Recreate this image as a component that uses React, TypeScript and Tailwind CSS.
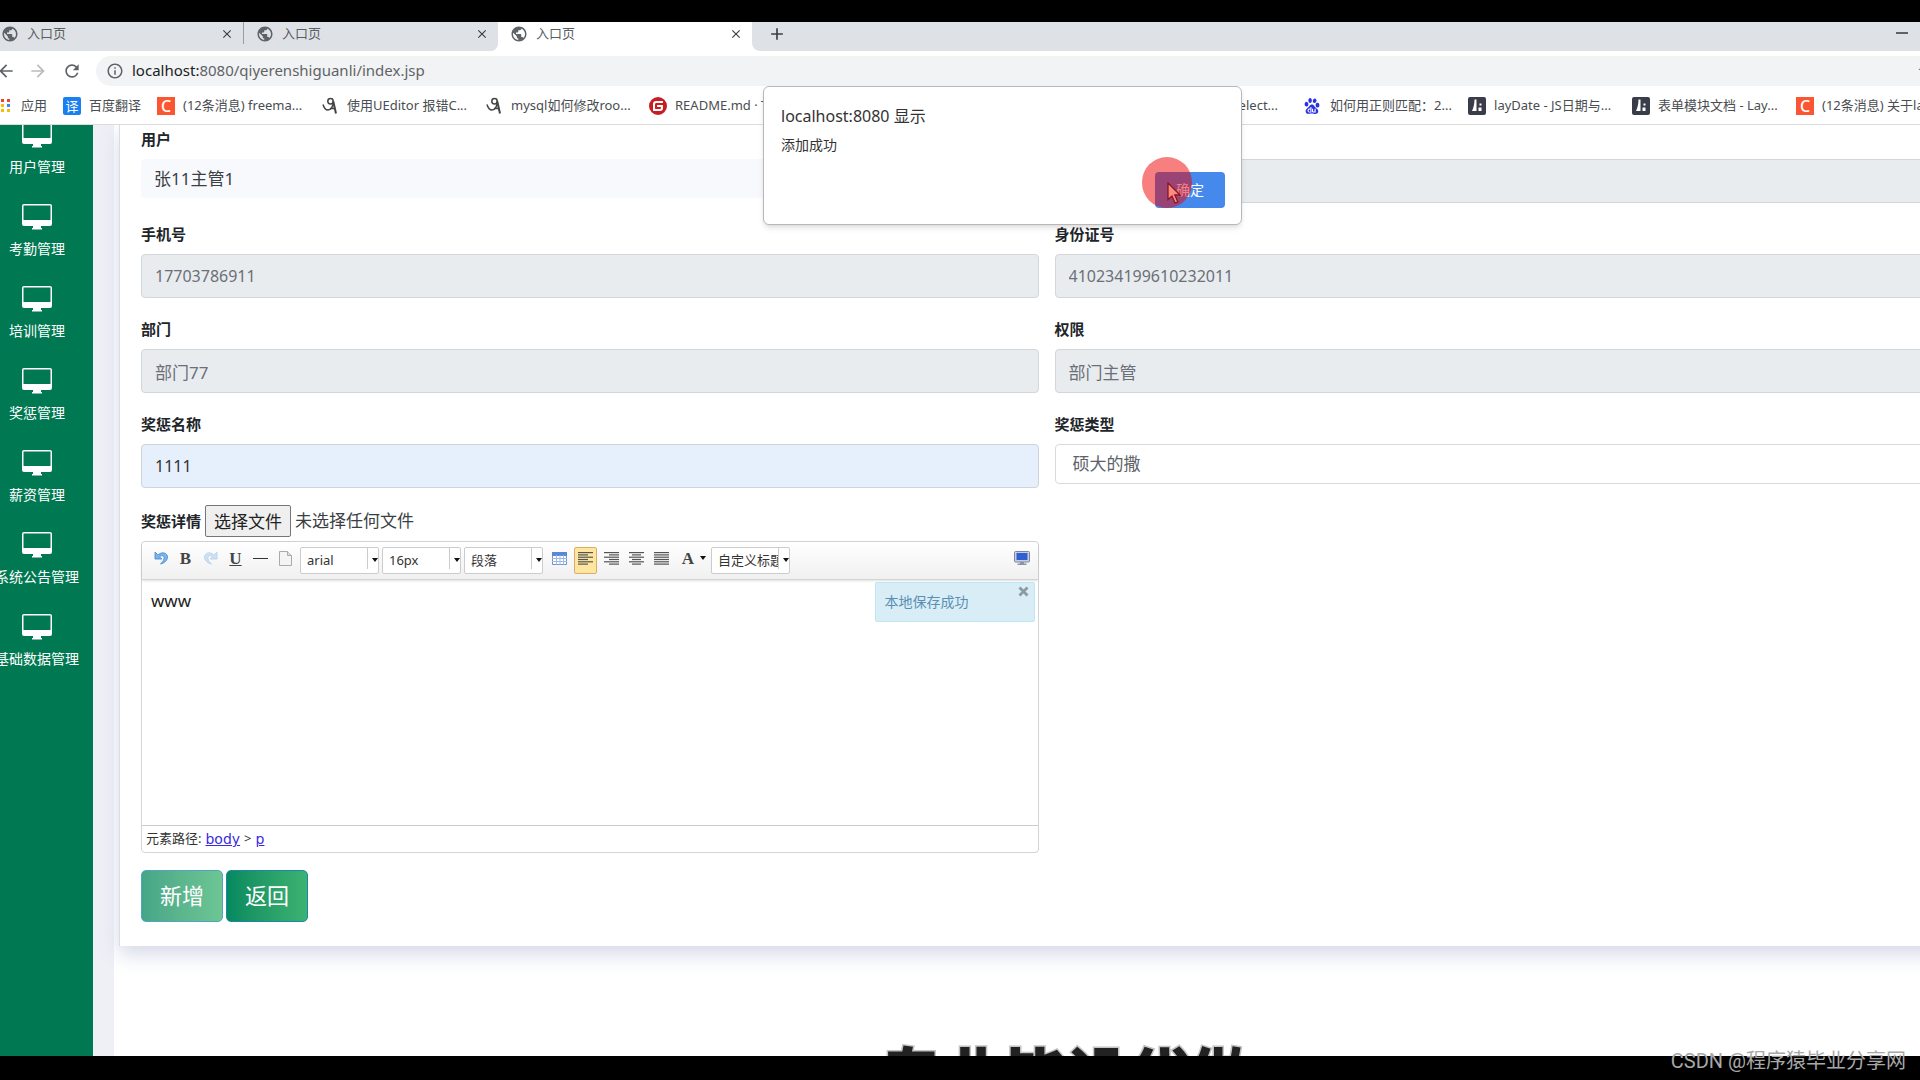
import React, { useRef, useState } from "react";
import {
    MdAdd,
    MdArrowBack,
    MdArrowForward,
    MdClose,
    MdInfoOutline,
    MdPublic,
    MdRefresh,
    MdStar,
} from "react-icons/md";
import { SiBaidu, SiGitee } from "react-icons/si";

const menus = [
    "用户管理",
    "考勤管理",
    "培训管理",
    "奖惩管理",
    "薪资管理",
    "系统公告管理",
    "基础数据管理",
];

const DesktopIcon = () => (
    <svg width="30" height="26" viewBox="0 0 30 26" fill="#fff">
        <path
            fillRule="evenodd"
            d="M2 0h26a2 2 0 0 1 2 2v18a2 2 0 0 1-2 2H2a2 2 0 0 1-2-2V2a2 2 0 0 1 2-2Zm-.5 1.500V16h27V1.500Z"
        />
        <path d="M11 22h8v2h1v1.500H10V24h1Z" />
    </svg>
);

const AppsIcon = () => (
    <svg width="12" height="14" viewBox="0 0 12 14">
        <path fill="#ea4335" d="M1 0h3v3H1zM7 0h3v3H7z" />
        <path fill="#fbbc04" d="M1 5h3v3H1z" />
        <path fill="#4285f4" d="M7 5h3v3H7z" />
        <path fill="#fbbc04" d="M1 10h3v3H1zM7 10h3v3H7z" />
    </svg>
);

const CIcon = () => (
    <span className="flex h-[18px] w-[18px] shrink-0 items-center justify-center bg-[#fc5531] text-base leading-none font-medium text-white">
        C
    </span>
);

const BrushIcon = () => (
    <svg width="18" height="18" viewBox="0 0 18 18" fill="none" stroke="#444" className="shrink-0">
        <circle cx="9.5" cy="4.2" r="2.7" strokeWidth="1.5" />
        <path d="M12.2 4.500c.3 4.500-2 8.500-5.200 8.500-2.500 0-4-2-5-5.500" strokeWidth="1.500" />
        <path d="M12.300 4.500 15 16.500" strokeWidth="2" />
        <path d="M9 11.500h4.500" strokeWidth="1.500" />
    </svg>
);

const LayuiIcon = () => (
    <svg width="18" height="18" viewBox="0 0 18 18" className="shrink-0">
        <rect width="18" height="18" rx="2" fill="#393d49" />
        <path fill="#fff" d="M8.500 2.500V14H4C5.500 11 6.500 7 6.500 2.500ZM11.500 6.500h2v2h-2zM10.500 10.500h3V14h-3z" />
    </svg>
);

const TranslateIcon = () => (
    <span className="flex h-[18px] w-[18px] shrink-0 items-center justify-center rounded-xs bg-[#1a7ff0] text-[13px] leading-none text-white">
        译
    </span>
);

const Tab = ({ active }: { active?: boolean }) => (
    <div
        className={`flex w-[254px] items-center pr-[9px] pb-[5px] pl-3 ${
            active ? "bg-white" : "bg-[#dee1e6]"
        }`}
    >
        <MdPublic className="mr-2 text-lg text-[#5f6368]" />
        <span className="flex-1 text-[13px] text-[#5a5d61]">入口页</span>
        <button aria-label="关闭标签页">
            <MdClose className="text-sm text-[#3c4043]" />
        </button>
    </div>
);

const Bookmark = ({ icon, text }: { icon: React.ReactNode; text: string }) => (
    <a href="#" className="flex w-[146px] shrink-0 items-center gap-2 whitespace-nowrap">
        {icon}
        {text}
    </a>
);

const BrowserBar = () => (
    <header className="border-b border-[#dcdcdc] bg-white text-[#3c4043]">
        <div className="flex h-[29px] items-stretch bg-white">
            <div className="-ml-[11px] flex items-stretch overflow-hidden rounded-br-lg bg-[#dee1e6]">
                <Tab />
                <span className="h-[22px] w-px bg-[#9a9da1]" />
                <Tab />
            </div>
            <Tab active />
            <div className="flex flex-1 items-stretch rounded-bl-lg bg-[#dee1e6]">
                <button aria-label="新标签页" className="px-[15px] pb-[5px]">
                    <MdAdd className="text-xl" />
                </button>
                <button aria-label="最小化" className="mr-3 ml-auto pb-2">
                    <span className="block h-0.5 w-3 bg-[#5f6368]" />
                </button>
            </div>
        </div>
        <div className="flex h-[40px] items-center pb-px text-xl text-[#5f6368]">
            <button aria-label="后退" className="-ml-1">
                <MdArrowBack />
            </button>
            <button aria-label="前进" className="ml-3 text-[#babcbe]">
                <MdArrowForward />
            </button>
            <button aria-label="刷新" className="ml-[14px]">
                <MdRefresh />
            </button>
            <div className="-mr-4 ml-[14px] flex h-[30px] flex-1 items-center gap-2 rounded-l-full bg-[#f1f3f4] pl-[10px]">
                <MdInfoOutline className="text-lg" />
                <span className="flex-1 text-[15px]">
                    <span className="text-[#202124]">localhost:</span>8080/qiyerenshiguanli/index.jsp
                </span>
                <MdStar className="mr-px text-lg" />
            </div>
        </div>
        <nav className="flex h-[33px] items-center overflow-hidden pb-[3px] text-[13px] text-[#4a4d51]">
            <a href="#" className="flex shrink-0 items-center gap-[9px]">
                <AppsIcon />
                应用
            </a>
            <a href="#" className="ml-4 flex shrink-0 items-center gap-2">
                <TranslateIcon />
                百度翻译
            </a>
            <div className="ml-4 flex shrink-0 gap-[18px]">
                <Bookmark icon={<CIcon />} text="(12条消息) freema..." />
                <Bookmark icon={<BrushIcon />} text="使用UEditor 报错C..." />
                <Bookmark icon={<BrushIcon />} text="mysql如何修改roo..." />
                <Bookmark
                    icon={<SiGitee className="shrink-0 text-lg text-[#c71d23]" />}
                    text="README.md · T"
                />
                <a href="#" className="w-[473px] pr-2 text-right">
                    select...
                </a>
                <Bookmark
                    icon={<SiBaidu className="mr-0.5 shrink-0 text-base text-[#2932e1]" />}
                    text="如何用正则匹配：2..."
                />
                <Bookmark icon={<LayuiIcon />} text="layDate - JS日期与..." />
                <Bookmark icon={<LayuiIcon />} text="表单模块文档 - Lay..." />
                <Bookmark icon={<CIcon />} text="(12条消息) 关于la..." />
            </div>
        </nav>
    </header>
);

const Sidebar = () => (
    <nav className="w-[93px] shrink-0 overflow-hidden bg-[#007851] text-sm text-white">
        <ul className="-mt-[14px] pr-[19px]">
            {menus.map((name) => (
                <li key={name} className="h-[82px] pt-[11px]">
                    <a href="#" className="flex flex-col items-center gap-[9px] whitespace-nowrap">
                        <DesktopIcon />
                        {name}
                    </a>
                </li>
            ))}
        </ul>
    </nav>
);

interface FieldProps {
    id: string;
    label: string;
    children: React.ReactNode;
}

const Field = ({ id, label, children }: FieldProps) => (
    <div className="h-[74px]">
        <label htmlFor={id} className="mb-[10px] block text-[15px] leading-5 font-bold text-[#212529]">
            {label}
        </label>
        {children}
    </div>
);

const readonlyInput =
    "block h-[44px] w-full rounded border border-[#d3d7db] bg-[#e9ecef] px-[13px] text-[#6a7077]";

const Caret = () => (
    <svg width="6" height="4" viewBox="0 0 6 4" className="shrink-0">
        <path d="M0 0h6L3 4Z" fill="#111" />
    </svg>
);

const Combo = ({ text }: { text: string }) => (
    <button
        type="button"
        className="flex h-[27px] w-[79px] items-start rounded-xs border border-[#ccc] bg-white text-[13px] text-[#333]"
    >
        <span className="w-[67px] overflow-hidden pl-[6px] text-left leading-6 whitespace-nowrap">
            {text}
        </span>
        <span className="mr-[4px] h-[21px] w-px shrink-0 bg-[#ccc]" />
        <span className="flex h-6 items-center">
            <Caret />
        </span>
    </button>
);

// x and width of every line in each align icon
const alignLines = {
    left: [[0, 15], [0, 10], [0, 15], [0, 10], [0, 15], [0, 10]],
    right: [[0, 15], [5, 10], [0, 15], [5, 10], [0, 15], [5, 10]],
    center: [[0, 15], [3, 9], [0, 15], [3, 9], [0, 15], [3, 9]],
    justify: [[0, 15], [0, 15], [0, 15], [0, 15], [0, 15], [0, 15]],
};

const AlignIcon = ({ type }: { type: keyof typeof alignLines }) => (
    <svg width="15" height="13" viewBox="0 0 15 13" fill="#555">
        {alignLines[type].map(([x, w], i) => (
            <rect key={i} x={x} y={i * 2.3} width={w} height="1.200" />
        ))}
    </svg>
);

const UndoIcon = ({ redo }: { redo?: boolean }) => (
    <svg
        width="14"
        height="14"
        viewBox="0 0 14 14"
        className={redo ? "-scale-x-100 opacity-35" : ""}
    >
        <path
            d="M1 1v7h7L5.500 6C8 3.500 10.500 5 10 7.500 9.700 10 8 11.500 6.500 13 11 12 13.500 9 13.500 6 13.500 2 8 0 4 4Z"
            fill="#7db4ec"
            stroke="#3f86d0"
            strokeWidth=".8"
        />
    </svg>
);

const ToolButton = ({ label, children }: { label: string; children: React.ReactNode }) => (
    <button
        type="button"
        aria-label={label}
        className="flex h-[27px] w-[25px] items-center justify-center pb-[5px]"
    >
        {children}
    </button>
);

const Editor = () => {
    const [saved, setSaved] = useState(true);

    return (
        <div className="rounded border border-[#d4d4d4] bg-white">
            <div className="flex h-[38px] items-center rounded-t border-b border-[#d4d4d4] bg-linear-to-b from-white to-[#f0f0f0] pl-[6px] shadow-sm">
                <ToolButton label="撤销">
                    <UndoIcon />
                </ToolButton>
                <ToolButton label="加粗">
                    <b className="font-['Liberation_Serif',serif] text-[17px] leading-none text-[#444]">B</b>
                </ToolButton>
                <ToolButton label="重做">
                    <UndoIcon redo />
                </ToolButton>
                <ToolButton label="下划线">
                    <b className="font-['Liberation_Serif',serif] text-[17px] leading-none text-[#444] underline">
                        U
                    </b>
                </ToolButton>
                <ToolButton label="分隔线">
                    <span className="h-px w-[15px] bg-[#333]" />
                </ToolButton>
                <ToolButton label="清空文档">
                    <svg width="13" height="15" viewBox="0 0 13 15">
                        <path d="M.5.5h8l4 4v10H.5Z" fill="#f4f4f4" stroke="#aaa" />
                        <path d="M8.500.5v4h4" fill="#ddd" stroke="#aaa" />
                    </svg>
                </ToolButton>
                <div className="mr-[4px] ml-[2px] flex gap-[3px]">
                    <Combo text="arial" />
                    <Combo text="16px" />
                    <Combo text="段落" />
                </div>
                <ToolButton label="插入表格">
                    <svg width="15" height="13" viewBox="0 0 15 13">
                        <path d="M.5.5h14v12H.5Z" fill="#fff" stroke="#6f93cf" />
                        <path d="M0 0h15v4H0Z" fill="#5a86d6" />
                        <path d="M4.500 3v10M8 3v10M11.500 3v10M0 6.500h15M0 9.500h15" stroke="#9db8e4" />
                    </svg>
                </ToolButton>
                <button
                    type="button"
                    aria-label="居左对齐"
                    className="mx-[2px] flex h-[27px] w-[23px] items-center justify-center rounded-xs border border-[#dcac6c] bg-[#ffe69f] pb-[5px]"
                >
                    <AlignIcon type="left" />
                </button>
                <ToolButton label="居右对齐">
                    <AlignIcon type="right" />
                </ToolButton>
                <ToolButton label="居中对齐">
                    <AlignIcon type="center" />
                </ToolButton>
                <ToolButton label="两端对齐">
                    <AlignIcon type="justify" />
                </ToolButton>
                <button
                    type="button"
                    aria-label="字体颜色"
                    className="mr-[5px] flex h-[27px] w-[32px] items-center justify-end gap-[6px] pb-[5px]"
                >
                    <b className="font-['Liberation_Serif',serif] text-[17px] leading-none text-[#444]">A</b>
                    <Caret />
                </button>
                <Combo text="自定义标题" />
                <button type="button" aria-label="全屏" className="mr-2 ml-auto pb-[5px]">
                    <svg width="16" height="14" viewBox="0 0 16 14">
                        <rect x=".5" y=".5" width="15" height="10.500" rx="1" fill="#c9cedb" stroke="#7a86a5" />
                        <rect x="2.500" y="2" width="11" height="7" fill="#2f5fd0" />
                        <path d="M6 11h4v1.500h2.500V14h-9v-1.500H6Z" fill="#8c94a8" />
                    </svg>
                </button>
            </div>
            <div className="flex h-[245px] justify-between pt-[2px] pr-[3px] pl-[9px]">
                <p className="pt-[7px] text-[17px] leading-6 text-[#222]">www</p>
                {saved && (
                    <div className="flex h-10 w-[160px] items-start justify-between rounded-xs border border-[#bce8f1] bg-[#d9edf7] pl-[9px] text-sm leading-[38px] text-[#5a8fb3]">
                        本地保存成功
                        <button
                            type="button"
                            aria-label="关闭提示"
                            className="mt-[3px] mr-[5px] leading-none"
                            onClick={() => setSaved(false)}
                        >
                            <svg width="11" height="11" viewBox="0 0 11 11">
                                <path d="M1.500 1.500l8 8M9.500 1.500l-8 8" stroke="#8c9aa3" strokeWidth="2.800" />
                            </svg>
                        </button>
                    </div>
                )}
            </div>
            <div className="flex h-[27px] items-center gap-1 border-t border-[#ccc] pl-1 text-[13px] text-[#333]">
                <span>元素路径:</span>
                <a href="#" className="font-['DejaVu_Sans',sans-serif] text-sm text-[#3a2be0] underline">
                    body
                </a>
                <span>&gt;</span>
                <a href="#" className="font-['DejaVu_Sans',sans-serif] text-sm text-[#3a2be0] underline">
                    p
                </a>
            </div>
        </div>
    );
};

const RewardForm = () => {
    const fileRef = useRef<HTMLInputElement>(null);
    const [name, setName] = useState("1111");

    return (
        <form
            className="-mr-[55px] ml-[5px] border-l border-[#d9dce6] bg-white pt-1 pr-[23px] pb-6 pl-[21px] shadow-[0_8px_20px_#d3d8e8]"
            onSubmit={(e) => e.preventDefault()}
        >
            <div className="grid grid-cols-2 gap-x-4 gap-y-[21px]">
                <Field id="user" label="用户">
                    <select
                        id="user"
                        className="block h-[39px] w-full appearance-none rounded bg-[#f8f9fc] px-[13px] text-[17px] text-[#3b3f44]"
                    >
                        <option>张11主管1</option>
                    </select>
                </Field>
                <Field id="username" label="姓名">
                    <input id="username" readOnly className={readonlyInput} />
                </Field>
                <Field id="phone" label="手机号">
                    <input id="phone" readOnly value="17703786911" className={`${readonlyInput} text-base`} />
                </Field>
                <Field id="idcard" label="身份证号">
                    <input
                        id="idcard"
                        readOnly
                        value="410234199610232011"
                        className={`${readonlyInput} text-base`}
                    />
                </Field>
                <Field id="dept" label="部门">
                    <input id="dept" readOnly value="部门77" className={`${readonlyInput} text-[17px]`} />
                </Field>
                <Field id="role" label="权限">
                    <input id="role" readOnly value="部门主管" className={`${readonlyInput} text-[17px]`} />
                </Field>
                <Field id="name" label="奖惩名称">
                    <input
                        id="name"
                        value={name}
                        onChange={(e) => setName(e.target.value)}
                        className="block h-[44px] w-full rounded border border-[#ced4da] bg-[#e6f0fd] px-[13px] text-base text-[#333]"
                    />
                </Field>
                <Field id="type" label="奖惩类型">
                    <select
                        id="type"
                        className="block h-[40px] w-full appearance-none rounded border border-[#d8dadd] bg-white px-[17px] text-[17px] text-[#5c6268]"
                    >
                        <option>硕大的撒</option>
                    </select>
                </Field>
            </div>

            <div className="mt-[17px] grid grid-cols-2 gap-x-4">
                <div>
                    <div className="mb-1 flex h-8 items-center gap-1 text-[17px] text-[#3b3f44]">
                        <label htmlFor="file" className="text-[15px] font-bold text-[#212529]">
                            奖惩详情
                        </label>
                        <input id="file" ref={fileRef} type="file" className="hidden" />
                        <button
                            type="button"
                            className="h-8 rounded-xs border border-[#767676] bg-[#efefef] px-2 leading-none text-[#222]"
                            onClick={() => fileRef.current?.click()}
                        >
                            选择文件
                        </button>
                        <span>未选择任何文件</span>
                    </div>
                    <Editor />
                </div>
            </div>

            <div className="mt-[17px] flex gap-[3px] text-[22px] text-white">
                <button
                    type="submit"
                    className="h-[52px] rounded-[5px] border border-[#1c86a8] bg-linear-to-r from-[#04895f] to-[#3cb371] px-[18px] pb-0.5 opacity-75"
                >
                    新增
                </button>
                <button
                    type="button"
                    className="h-[52px] rounded-[5px] border border-[#1c86a8] bg-linear-to-r from-[#04895f] to-[#3cb371] px-[18px] pb-0.5"
                >
                    返回
                </button>
            </div>
        </form>
    );
};

const AlertDialog = () => (
    <div
        role="alertdialog"
        aria-label="localhost:8080 显示"
        className="absolute top-[86px] left-[763px] w-[479px] rounded-md border border-[#b8b8b8] bg-white px-4 pt-[15px] pb-4 text-[#333] shadow-md"
    >
        <h2 className="pl-px text-base leading-7">localhost:8080 显示</h2>
        <p className="mt-[3px] pl-px text-sm leading-6">添加成功</p>
        <div className="relative mt-[15px] flex justify-end">
            <button className="h-9 w-[70px] rounded bg-[#4489eb] text-sm text-white">确定</button>
            {/* click highlight and pointer */}
            <span className="absolute -top-[15px] right-[33px] h-[51px] w-[50px] rounded-full bg-[#f00000]/50" />
            <svg width="14" height="22" viewBox="0 0 14 22" className="absolute top-[10px] right-[44px]">
                <path
                    d="M1 1v16.500l4-3.500 3 7 2.800-1.200-3-6.800H13Z"
                    fill="#ff8a80"
                    stroke="#8a1420"
                    strokeWidth="1.300"
                />
            </svg>
        </div>
    </div>
);

const App: React.FC = () => {
    return (
        <div className="relative flex min-h-screen flex-col overflow-hidden bg-black pt-[22px] pb-6 font-['Noto_Sans','Noto_Sans_CJK_SC',sans-serif]">
            <BrowserBar />
            <div className="relative flex flex-1 overflow-hidden bg-white">
                <Sidebar />
                <div className="w-[21px] shrink-0 bg-[#eff0f6]" />
                <main className="min-w-0 flex-1">
                    <RewardForm />
                </main>
                <p className="absolute -bottom-[55px] left-[880px] text-[62px] leading-[70px] font-black whitespace-nowrap text-[#222] [-webkit-text-stroke:3px_#c4c4c4] [paint-order:stroke]">
                    专业毕设代做
                </p>
            </div>
            <AlertDialog />
            <p className="absolute right-[14px] bottom-[5px] font-['Roboto','Noto_Sans_CJK_SC',sans-serif] text-xl leading-7 text-[#a8a8a8]">
                CSDN @程序猿毕业分享网
            </p>
        </div>
    );
};

export default App;
